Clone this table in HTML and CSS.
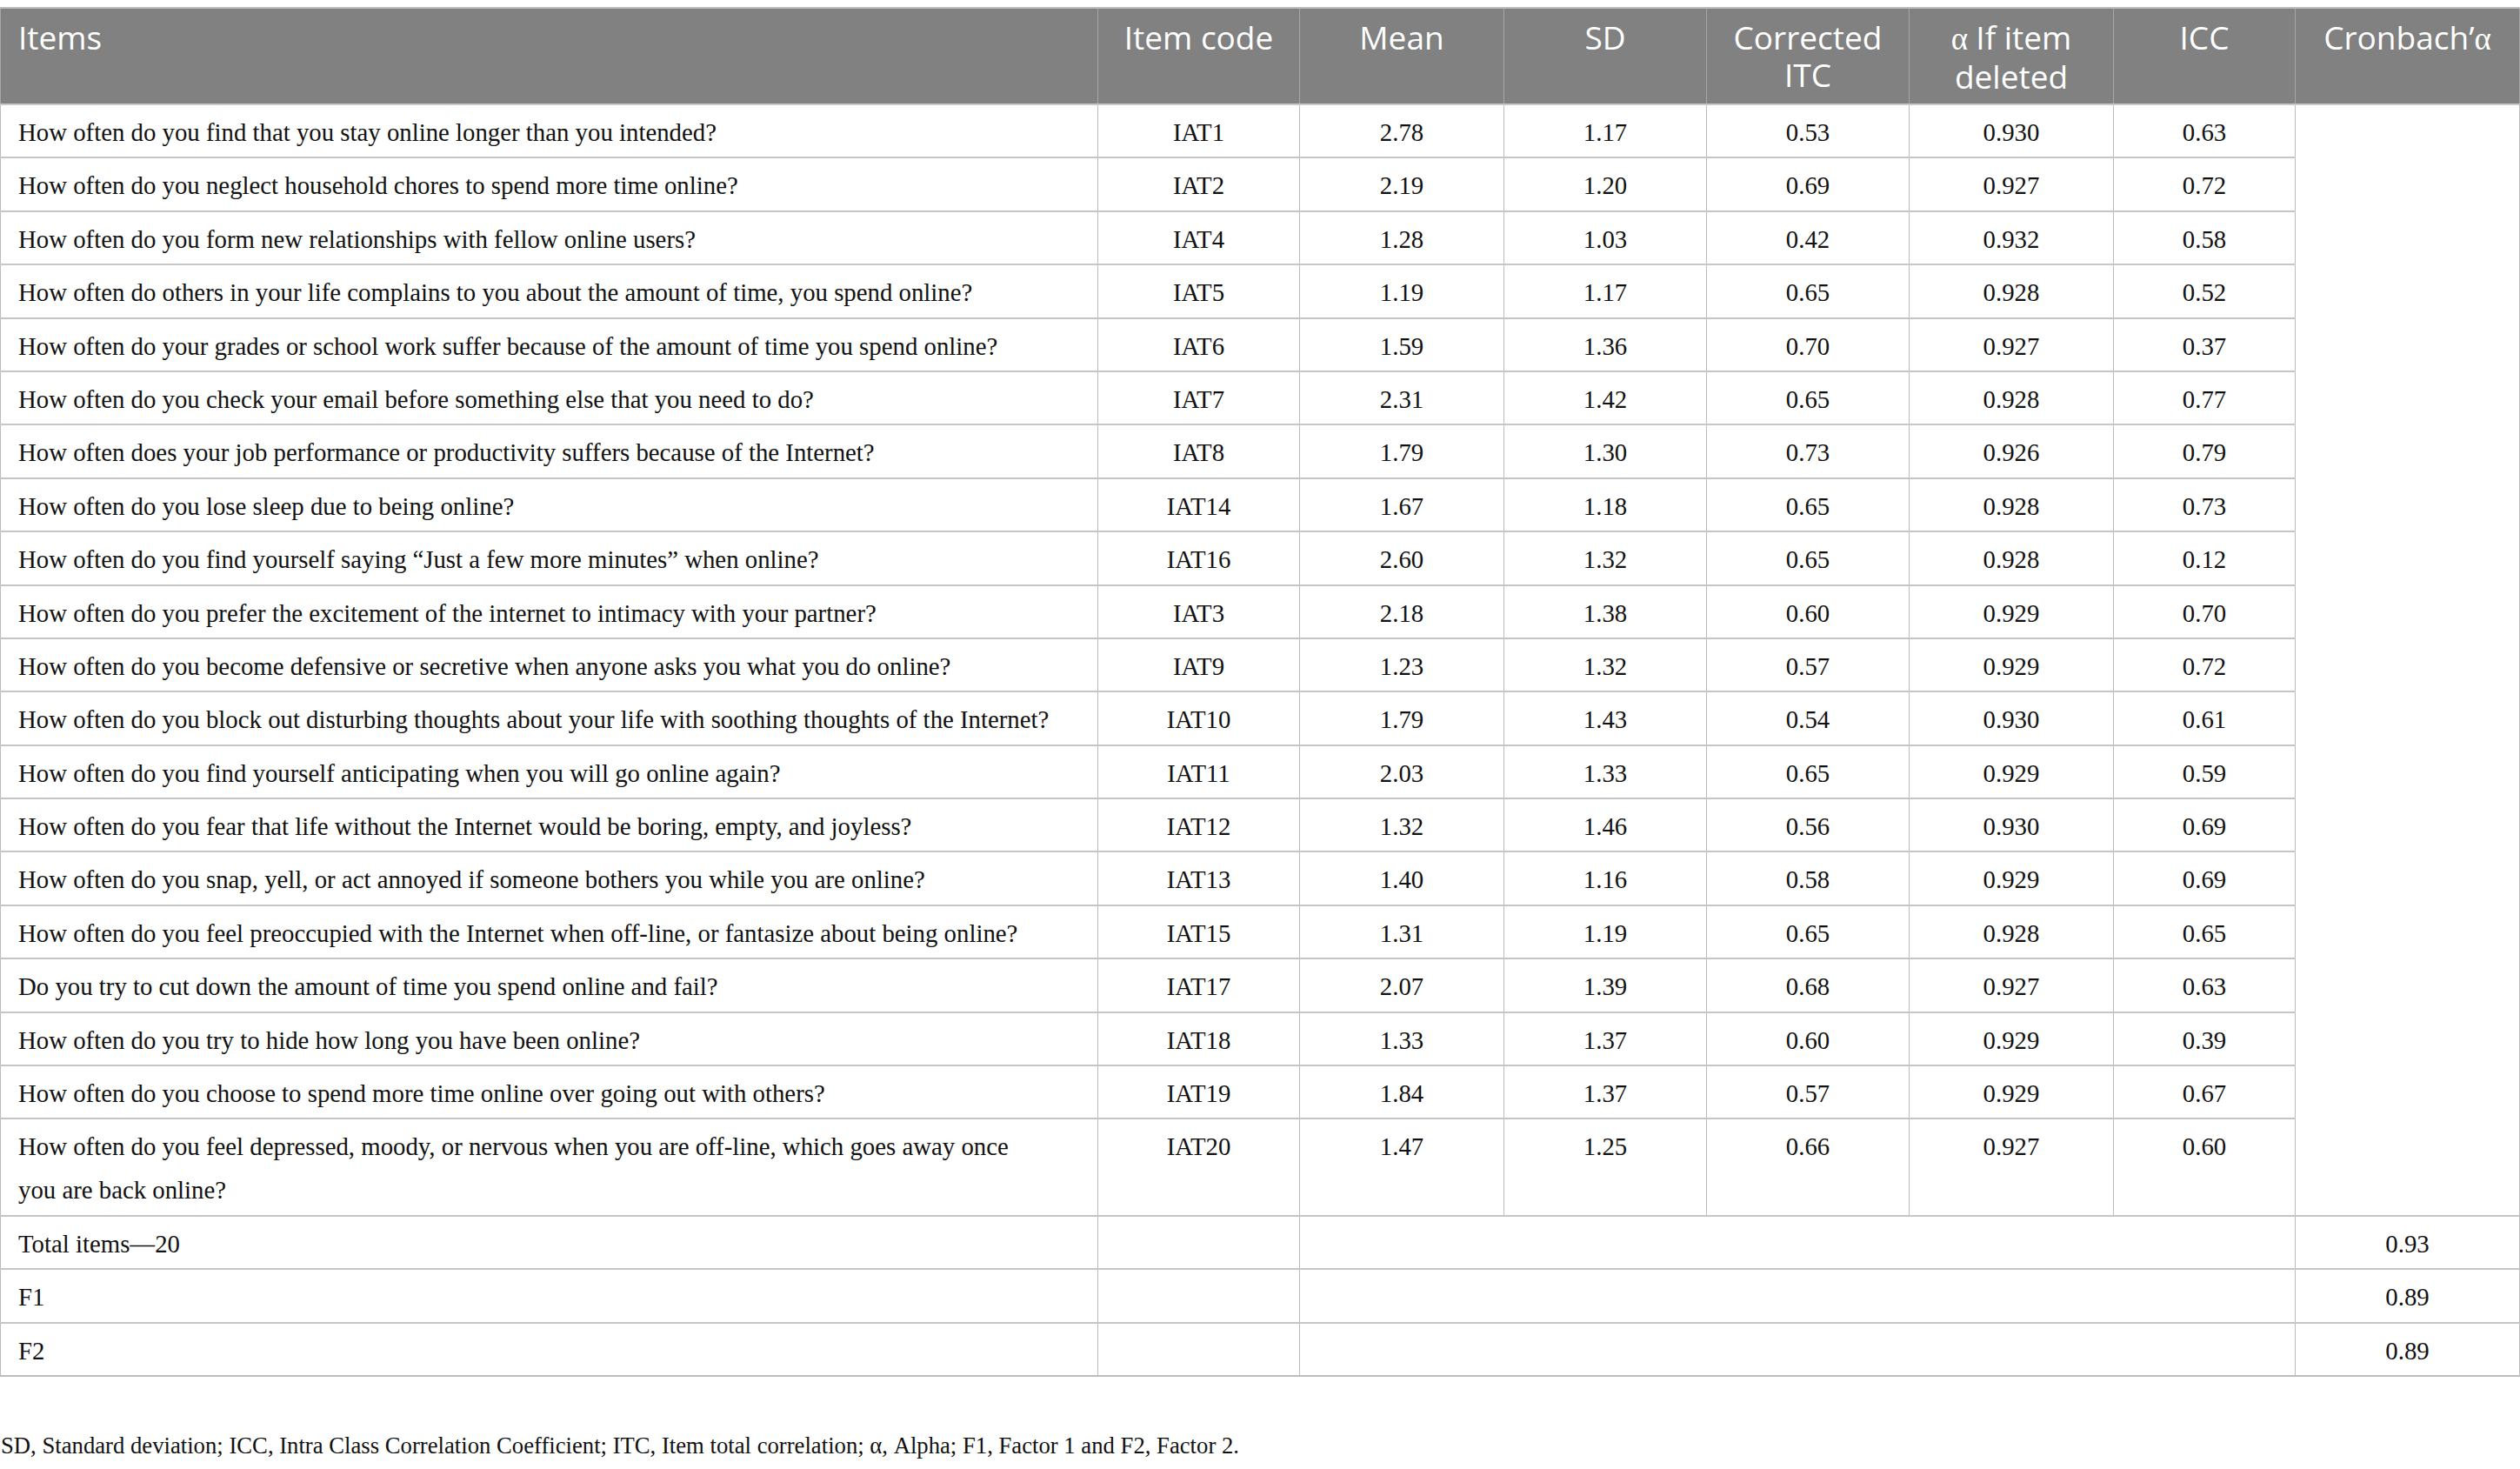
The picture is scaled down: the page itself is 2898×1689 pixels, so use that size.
FILE: index.html
```html
<!DOCTYPE HTML>
<html>
<head>
<meta charset="UTF-8">
<meta name="viewport" content="width=device-width, initial-scale=1">
<link rel="stylesheet" href="styles.css">
</head>
<body>

<table class="table">
    <colgroup>
        <col class="col-items">
        <col class="col-code">
        <col class="col-mean">
        <col class="col-sd">
        <col class="col-itc">
        <col class="col-alpha">
        <col class="col-icc">
        <col class="col-cron">
    </colgroup>
    <thead>
        <tr>
            <th class="left">Items</th>
            <th>Item code</th>
            <th>Mean</th>
            <th>SD</th>
            <th>Corrected ITC</th>
            <th><span class="greek">α </span>If item deleted</th>
            <th>ICC</th>
            <th>Cronbach’<span class="greek">α</span></th>
        </tr>
    </thead>
    <tbody>
        <tr>
            <td class="item">How often do you find that you stay online longer than you intended?</td>
            <td>IAT1</td><td>2.78</td><td>1.17</td><td>0.53</td><td>0.930</td><td>0.63</td>
            <td class="merged" rowspan="20"></td>
        </tr>
        <tr>
            <td class="item">How often do you neglect household chores to spend more time online?</td>
            <td>IAT2</td><td>2.19</td><td>1.20</td><td>0.69</td><td>0.927</td><td>0.72</td>
        </tr>
        <tr>
            <td class="item">How often do you form new relationships with fellow online users?</td>
            <td>IAT4</td><td>1.28</td><td>1.03</td><td>0.42</td><td>0.932</td><td>0.58</td>
        </tr>
        <tr>
            <td class="item">How often do others in your life complains to you about the amount of time, you spend online?</td>
            <td>IAT5</td><td>1.19</td><td>1.17</td><td>0.65</td><td>0.928</td><td>0.52</td>
        </tr>
        <tr>
            <td class="item">How often do your grades or school work suffer because of the amount of time you spend online?</td>
            <td>IAT6</td><td>1.59</td><td>1.36</td><td>0.70</td><td>0.927</td><td>0.37</td>
        </tr>
        <tr>
            <td class="item">How often do you check your email before something else that you need to do?</td>
            <td>IAT7</td><td>2.31</td><td>1.42</td><td>0.65</td><td>0.928</td><td>0.77</td>
        </tr>
        <tr>
            <td class="item">How often does your job performance or productivity suffers because of the Internet?</td>
            <td>IAT8</td><td>1.79</td><td>1.30</td><td>0.73</td><td>0.926</td><td>0.79</td>
        </tr>
        <tr>
            <td class="item">How often do you lose sleep due to being online?</td>
            <td>IAT14</td><td>1.67</td><td>1.18</td><td>0.65</td><td>0.928</td><td>0.73</td>
        </tr>
        <tr>
            <td class="item">How often do you find yourself saying “Just a few more minutes” when online?</td>
            <td>IAT16</td><td>2.60</td><td>1.32</td><td>0.65</td><td>0.928</td><td>0.12</td>
        </tr>
        <tr>
            <td class="item">How often do you prefer the excitement of the internet to intimacy with your partner?</td>
            <td>IAT3</td><td>2.18</td><td>1.38</td><td>0.60</td><td>0.929</td><td>0.70</td>
        </tr>
        <tr>
            <td class="item">How often do you become defensive or secretive when anyone asks you what you do online?</td>
            <td>IAT9</td><td>1.23</td><td>1.32</td><td>0.57</td><td>0.929</td><td>0.72</td>
        </tr>
        <tr>
            <td class="item">How often do you block out disturbing thoughts about your life with soothing thoughts of the Internet?</td>
            <td>IAT10</td><td>1.79</td><td>1.43</td><td>0.54</td><td>0.930</td><td>0.61</td>
        </tr>
        <tr>
            <td class="item">How often do you find yourself anticipating when you will go online again?</td>
            <td>IAT11</td><td>2.03</td><td>1.33</td><td>0.65</td><td>0.929</td><td>0.59</td>
        </tr>
        <tr>
            <td class="item">How often do you fear that life without the Internet would be boring, empty, and joyless?</td>
            <td>IAT12</td><td>1.32</td><td>1.46</td><td>0.56</td><td>0.930</td><td>0.69</td>
        </tr>
        <tr>
            <td class="item">How often do you snap, yell, or act annoyed if someone bothers you while you are online?</td>
            <td>IAT13</td><td>1.40</td><td>1.16</td><td>0.58</td><td>0.929</td><td>0.69</td>
        </tr>
        <tr>
            <td class="item">How often do you feel preoccupied with the Internet when off-line, or fantasize about being online?</td>
            <td>IAT15</td><td>1.31</td><td>1.19</td><td>0.65</td><td>0.928</td><td>0.65</td>
        </tr>
        <tr>
            <td class="item">Do you try to cut down the amount of time you spend online and fail?</td>
            <td>IAT17</td><td>2.07</td><td>1.39</td><td>0.68</td><td>0.927</td><td>0.63</td>
        </tr>
        <tr>
            <td class="item">How often do you try to hide how long you have been online?</td>
            <td>IAT18</td><td>1.33</td><td>1.37</td><td>0.60</td><td>0.929</td><td>0.39</td>
        </tr>
        <tr>
            <td class="item">How often do you choose to spend more time online over going out with others?</td>
            <td>IAT19</td><td>1.84</td><td>1.37</td><td>0.57</td><td>0.929</td><td>0.67</td>
        </tr>
        <tr>
            <td class="item">How often do you feel depressed, moody, or nervous when you are off-line, which goes away once<br>you are back online?</td>
            <td>IAT20</td><td>1.47</td><td>1.25</td><td>0.66</td><td>0.927</td><td>0.60</td>
        </tr>
        <!-- итоговые строки -->
        <tr>
            <td class="item">Total items—20</td>
            <td></td>
            <td colspan="5"></td>
            <td>0.93</td>
        </tr>
        <tr>
            <td class="item">F1</td>
            <td></td>
            <td colspan="5"></td>
            <td>0.89</td>
        </tr>
        <tr>
            <td class="item">F2</td>
            <td></td>
            <td colspan="5"></td>
            <td>0.89</td>
        </tr>
    </tbody>
</table>

<p class="footnote">SD, Standard deviation; ICC, Intra Class Correlation Coefficient; ITC, Item total correlation; α, Alpha; F1, Factor 1 and F2, Factor 2.</p>

</body>
</html>
```
FILE: styles.css
```css
html, body {
    margin: 0;
    padding: 0;
    background-color: white;
    font-family: "Liberation Serif", "Times New Roman", serif;
    color: #111;
}

.table {
    width: 2897px;
    margin-top: 8px;
    border-collapse: collapse;
    table-layout: fixed;
}

.col-items { width: 1262px; }
.col-code  { width: 232px; }
.col-mean  { width: 235px; }
.col-sd    { width: 233px; }
.col-itc   { width: 233px; }
.col-alpha { width: 235px; }
.col-icc   { width: 209px; }
.col-cron  { width: 258px; }

.table th {
    background-color: #808180;
    color: white;
    font-family: "Open Sans", "Noto Sans", sans-serif;
    font-weight: normal;
    font-size: 37px;
    line-height: 43px;
    text-align: center;
    vertical-align: top;
    padding: 11px 16px 10px;
    border-top: 2px solid #bdbdbd;
    border-left: 1px solid #a6a6a6;
    border-right: 1px solid #a6a6a6;
    border-bottom: 2px solid #c8c8c8;
}

.table th.left {
    text-align: left;
    padding-left: 20px;
}

.table th .greek {
    font-family: "Liberation Serif", serif;
}

.table td {
    font-size: 28.8px;
    line-height: 50px;
    text-align: center;
    vertical-align: top;
    padding: 6px 10px 3.4px;
    border-left: 1px solid #bcbcbc;
    border-right: 1px solid #bcbcbc;
    border-bottom: 2px solid #c6c6c6;
}

.table td.item {
    text-align: left;
    padding-left: 20px;
    padding-right: 4px;
    white-space: nowrap;
}

.table tr:last-child td {
    border-bottom: 2px solid #bdbdbd;
}

.footnote {
    margin: 62px 0 0 1px;
    font-size: 26.7px;
    line-height: 34px;
}
```
